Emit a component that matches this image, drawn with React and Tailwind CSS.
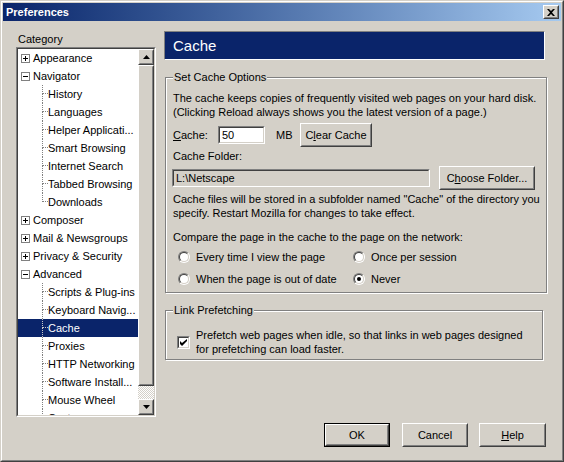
import React from "react";

const FONT = "font-['Liberation_Sans',Arial,sans-serif]";

function Raised({ className = "", children }) {
  return (
    <div className={"border border-t-white border-l-white border-r-[#404040] border-b-[#404040] bg-[#d4d0c8] " + className}>
      <div className="h-full w-full border border-t-[#d4d0c8] border-l-[#d4d0c8] border-r-[#808080] border-b-[#808080] flex items-center justify-center">
        {children}
      </div>
    </div>
  );
}

function Button({ className = "", isDefault = false, children }) {
  if (isDefault) {
    return (
      <div className={"border border-black " + className}>
        <Raised className="h-full w-full">{children}</Raised>
      </div>
    );
  }
  return <Raised className={className}>{children}</Raised>;
}

function Sunken({ className = "", innerClass = "", children }) {
  return (
    <div className={"border border-t-[#808080] border-l-[#808080] border-r-white border-b-white " + className}>
      <div className={"h-full w-full border border-t-[#404040] border-l-[#404040] border-r-[#d4d0c8] border-b-[#d4d0c8] " + innerClass}>
        {children}
      </div>
    </div>
  );
}

function Expander({ open }) {
  return (
    <span className="w-[9px] h-[9px] border border-[#808080] bg-white relative flex items-center justify-center shrink-0">
      <svg width="7" height="7" viewBox="0 0 7 7">
        <rect x="1" y="3" width="5" height="1" fill="#000" />
        {!open && <rect x="3" y="1" width="1" height="5" fill="#000" />}
      </svg>
    </span>
  );
}

const rows = [
  { t: "Appearance", top: true, open: false },
  { t: "Navigator", top: true, open: true },
  { t: "History" },
  { t: "Languages" },
  { t: "Helper Applicati..." },
  { t: "Smart Browsing" },
  { t: "Internet Search" },
  { t: "Tabbed Browsing" },
  { t: "Downloads", last: true },
  { t: "Composer", top: true, open: false },
  { t: "Mail & Newsgroups", top: true, open: false },
  { t: "Privacy & Security", top: true, open: false },
  { t: "Advanced", top: true, open: true },
  { t: "Scripts & Plug-ins" },
  { t: "Keyboard Navig..." },
  { t: "Cache", sel: true },
  { t: "Proxies" },
  { t: "HTTP Networking" },
  { t: "Software Install..." },
  { t: "Mouse Wheel" },
  { t: "Custom..." },
];

function TreeRow({ r }) {
  if (r.top) {
    return (
      <div className="h-[18px] flex items-center pl-[3px] whitespace-nowrap">
        <Expander open={r.open} />
        <span className="ml-[3px]">{r.t}</span>
      </div>
    );
  }
  const lineColor = r.sel ? "border-[#c8c8c8]" : "border-[#808080]";
  return (
    <div className={"h-[18px] flex items-stretch whitespace-nowrap " + (r.sel ? "bg-[#0a246a] text-white" : "")}>
      <span className="ml-[24px] w-[6px] flex flex-col shrink-0">
        <span className={"h-[9px] border-l border-b border-dotted " + lineColor}></span>
        {!r.last && <span className={"flex-1 border-l border-dotted " + lineColor}></span>}
      </span>
      <span className="flex items-center">{r.t}</span>
    </div>
  );
}

function Arrow({ up }) {
  return (
    <svg width="7" height="4" viewBox="0 0 7 4">
      {up ? <polygon points="3.5,0 7,4 0,4" fill="#000" /> : <polygon points="0,0 7,0 3.5,4" fill="#000" />}
    </svg>
  );
}

function Radio({ checked }) {
  return (
    <span className="w-[12px] h-[12px] rounded-full border border-t-[#808080] border-l-[#808080] border-r-white border-b-white shrink-0">
      <span className="w-full h-full rounded-full border border-t-[#404040] border-l-[#404040] border-r-[#d4d0c8] border-b-[#d4d0c8] bg-white flex items-center justify-center">
        {checked && <span className="w-[4px] h-[4px] rounded-full bg-black"></span>}
      </span>
    </span>
  );
}

export default function App() {
  return (
    <div className={FONT + " text-[11px] leading-[14px] text-black w-[564px] h-[462px]"}>
      <div className="w-full h-full border border-t-[#d4d0c8] border-l-[#d4d0c8] border-r-[#404040] border-b-[#404040]">
        <div className="w-full h-full border border-t-white border-l-white border-r-[#808080] border-b-[#808080] bg-[#d4d0c8] p-[1px] flex flex-col">
          {/* Title bar */}
          <div className="h-[18px] bg-gradient-to-r from-[#0a246a] to-[#a6caf0] flex items-center justify-between pl-[3px] pr-[2px] shrink-0">
            <span className="text-white font-bold text-[11px]">Preferences</span>
            <Raised className="w-[16px] h-[14px]">
              <svg width="8" height="7" viewBox="0 0 8 7">
                <path d="M0 0h2l2 2 2-2h2L5 3.5 8 7H6L4 5 2 7H0l3-3.5z" fill="#000" />
              </svg>
            </Raised>
          </div>

          {/* Body */}
          <div className="pt-[10px] flex flex-col">
            <div className="flex pl-[13px]">
              {/* Left column */}
              <div className="w-[140px] flex flex-col">
                <div className="h-[16px] pl-[2px] leading-[16px]">Category</div>
                <Sunken className="h-[370px]" innerClass="flex">
                  <div className="flex-1 bg-white overflow-hidden">
                    {rows.map((r, i) => (
                      <TreeRow key={i} r={r} />
                    ))}
                  </div>
                  <div className="w-[16px] flex flex-col">
                    <Raised className="h-[16px]"><Arrow up /></Raised>
                    <Raised className="h-[321px]"></Raised>
                    <div className="flex-1 bg-[repeating-conic-gradient(#ffffff_0%_25%,#d4d0c8_0%_50%)] bg-[length:2px_2px]"></div>
                    <Raised className="h-[16px]"><Arrow /></Raised>
                  </div>
                </Sunken>
              </div>

              {/* Right column */}
              <div className="ml-[8px] w-[381px] flex flex-col">
                <div className="h-[29px] bg-[#0a246a] border border-t-[#808080] border-l-[#808080] border-r-white border-b-white flex items-center pl-[8px]">
                  <span className="text-white text-[15px]">Cache</span>
                </div>

                <fieldset className="mt-[10px] ml-[1px] w-[378px] border border-[#808080] shadow-[1px_1px_0_#fff,inset_1px_1px_0_#fff] pl-[7px] pr-[6px] pb-[4px]">
                  <legend className="px-[1px] bg-[#d4d0c8] leading-[14px]">Set Cache Options</legend>
                  <div className="pt-[7px] whitespace-nowrap">
                    <div>The cache keeps copies of frequently visited web pages on your hard disk.</div>
                    <div>(Clicking Reload always shows you the latest version of a page.)</div>
                  </div>
                  <div className="mt-[4px] h-[24px] flex items-center">
                    <span className="w-[45px]"><span className="underline">C</span>ache:</span>
                    <Sunken className="w-[47px] h-[18px]" innerClass="bg-white flex items-center pl-[2px]">50</Sunken>
                    <span className="ml-[11px] w-[24px]">MB</span>
                    <Button className="w-[72px] h-[24px]">C<span className="underline">l</span>ear Cache</Button>
                  </div>
                  <div className="mt-[2px]">Cache Folder:</div>
                  <div className="mt-[3px] h-[24px] flex items-center">
                    <Sunken className="-ml-[1px] w-[258px] h-[18px]" innerClass="bg-[#d4d0c8] flex items-center pl-[2px]">L:\Netscape</Sunken>
                    <Button className="ml-[9px] w-[96px] h-[24px]">C<span className="underline">h</span>oose Folder...</Button>
                  </div>
                  <div className="mt-[2px] whitespace-nowrap">
                    <div>Cache files will be stored in a subfolder named "Cache" of the directory you</div>
                    <div>specify. Restart Mozilla for changes to take effect.</div>
                  </div>
                  <div className="mt-[10px]">Compare the page in the cache to the page on the network:</div>
                  <div className="mt-[4px] pl-[5px] grid grid-cols-[175px_1fr] gap-y-[4px] whitespace-nowrap">
                    <div className="h-[18px] flex items-center gap-[6px]"><Radio /><span>Every time I view the page</span></div>
                    <div className="h-[18px] flex items-center gap-[6px]"><Radio /><span>Once per session</span></div>
                    <div className="h-[18px] flex items-center gap-[6px]"><Radio /><span>When the page is out of date</span></div>
                    <div className="h-[18px] flex items-center gap-[6px]"><Radio checked /><span>Never</span></div>
                  </div>
                </fieldset>

                <fieldset className="mt-[10px] ml-[1px] w-[378px] border border-[#808080] shadow-[1px_1px_0_#fff,inset_1px_1px_0_#fff] pl-[7px] pr-[6px] pb-[3px]">
                  <legend className="px-[1px] bg-[#d4d0c8] leading-[14px]">Link Prefetching</legend>
                  <div className="pt-[11px] pl-[4px] flex items-center gap-[6px]">
                    <Sunken className="w-[13px] h-[13px] shrink-0" innerClass="bg-white flex items-center justify-center">
                      <svg width="7" height="7" viewBox="0 0 7 7">
                        <path d="M0 2v3l2 2 5-5V0L2 4z" fill="#000" />
                      </svg>
                    </Sunken>
                    <div className="whitespace-nowrap">
                      <div>Prefetch web pages when idle, so that links in web pages designed</div>
                      <div>for prefetching can load faster.</div>
                    </div>
                  </div>
                </fieldset>
              </div>
            </div>

            {/* Buttons */}
            <div className="mt-[6px] flex justify-end pr-[15px]">
              <Button isDefault className="w-[66px] h-[24px]">OK</Button>
              <Button className="ml-[12px] w-[66px] h-[24px]">Cancel</Button>
              <Button className="ml-[11px] w-[67px] h-[24px]"><span><span className="underline">H</span>elp</span></Button>
            </div>
          </div>
        </div>
      </div>
    </div>
  );
}
